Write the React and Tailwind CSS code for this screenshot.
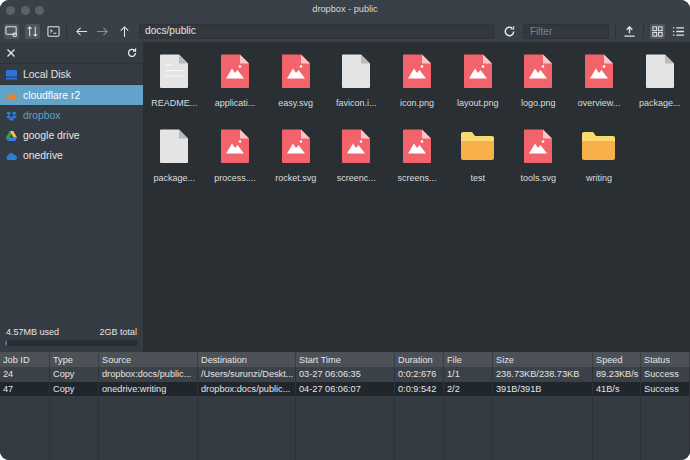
import React from 'react';

const topFiles = [
  ['README...', 'doc'], ['applicati...', 'img'], ['easy.svg', 'img'], ['favicon.i...', 'blank'], ['icon.png', 'img'],
  ['layout.png', 'img'], ['logo.png', 'img'], ['overview...', 'img'], ['package...', 'blank'],
  ['package...', 'blank'], ['process....', 'img'], ['rocket.svg', 'img'], ['screenc...', 'img'], ['screens...', 'img'],
  ['test', 'folder'], ['tools.svg', 'img'], ['writing', 'folder'],
];

const columns = 'grid grid-cols-[50px_49px_99px_98px_99px_49px_49px_100px_48px_49px]';

const jobs = [
  ['24', 'Copy', 'dropbox:docs/public...', '/Users/surunzi/Deskt...', '03-27 06:06:35', '0:0:2:676', '1/1', '238.73KB/238.73KB', '89.23KB/s', 'Success'],
  ['47', 'Copy', 'onedrive:writing', 'dropbox:docs/public...', '04-27 06:06:07', '0:0:9:542', '2/2', '391B/391B', '41B/s', 'Success'],
];

const headers = ['Job ID', 'Type', 'Source', 'Destination', 'Start Time', 'Duration', 'File', 'Size', 'Speed', 'Status'];

const FileIcon = ({ type }) => {
  if (type === 'folder') {
    return (
      <svg width="33" height="34" viewBox="0 0 33 34">
        <path d="M0 5a2 2 0 0 1 2-2h9l3 4h17a2 2 0 0 1 2 2v4H0z" fill="#fbd971" />
        <path d="M0 12h33v17a2 2 0 0 1-2 2H2a2 2 0 0 1-2-2z" fill="#f8b04a" />
      </svg>
    );
  }
  const body = type === 'img' ? '#f2636b' : '#e4e4e4';
  const fold = type === 'img' ? '#fbc4c7' : '#b9b9b9';
  return (
    <svg width="28" height="34" viewBox="0 0 28 34">
      <path d="M1 0.500h18l9 9V33a1 1 0 0 1-1 1H1a1 1 0 0 1-1-1V1.500a1 1 0 0 1 1-1z" fill={body} />
      <path d="M19 0.500l9 9h-9z" fill={fold} />
      {type === 'img' && (
        <g fill="#fff">
          <circle cx="19" cy="12.500" r="1.300" />
          <path d="M5 24.500L11 14.500l3 4.500 2.500-3 6.500 8.500z" />
        </g>
      )}
      {type === 'doc' && (
        <g fill="#fff" fillOpacity="0.85">
          <rect x="5" y="10.500" width="8" height="1" />
          <rect x="5" y="16" width="18" height="1" />
          <rect x="5" y="21.500" width="18" height="1" />
        </g>
      )}
    </svg>
  );
};

const ToolIcon = ({ children, active }) => (
  <div className={`w-[15px] h-[15px] shrink-0 flex items-center justify-center rounded-[2px] ${active ? 'bg-[#50565c]' : ''}`}>
    <svg width="13" height="13" viewBox="0 0 14 14" fill="none" stroke="currentColor" strokeWidth="1.100">
      {children}
    </svg>
  </div>
);

export default function App() {
  return (
    <div className="w-[690px] h-[460px] bg-white overflow-hidden text-[#e4e5e6] text-[9px]" style={{ fontFamily: '"Liberation Sans", Arial, sans-serif' }}>
      <div className="w-full h-full rounded-[9px] overflow-hidden flex flex-col bg-[#2a2f34]">
        {/* Title bar */}
        <div className="h-[20px] shrink-0 flex items-center bg-[#3a4047]">
          <div className="flex gap-[5.500px] pl-[6px]">
            <div className="w-[9px] h-[9px] rounded-full bg-[#5c6167]" />
            <div className="w-[9px] h-[9px] rounded-full bg-[#5c6167]" />
            <div className="w-[9px] h-[9px] rounded-full bg-[#5c6167]" />
          </div>
          <div className="flex-1 text-center text-[9.200px] text-[#d9dadb] pr-[44px]">dropbox - public</div>
        </div>

        {/* Toolbar */}
        <div className="h-[22px] shrink-0 flex items-center bg-[#3a4047] pl-[4px] text-[#e4e5e6]">
          <ToolIcon active>
            <rect x="1" y="2" width="11" height="8" rx="1" />
            <circle cx="10.500" cy="10.500" r="2" />
          </ToolIcon>
          <div className="w-[6px]" />
          <ToolIcon active>
            <path d="M4 12V2M2 4l2-2 2 2M10 2v10M8 10l2 2 2-2" />
          </ToolIcon>
          <div className="w-[6px]" />
          <ToolIcon>
            <rect x="1" y="2" width="12" height="10" rx="1" />
            <path d="M3.500 5l2 1.500-2 1.500M7 9h3" />
          </ToolIcon>
          <div className="w-[1px] h-[15px] bg-[#2f343a] ml-[5px] mr-[7px]" />
          <ToolIcon><path d="M13 7H2M6 3L2 7l4 4" /></ToolIcon>
          <div className="w-[6px]" />
          <div className="text-[#8b8f94]"><ToolIcon><path d="M1 7h11M8 3l4 4-4 4" /></ToolIcon></div>
          <div className="w-[7px]" />
          <ToolIcon><path d="M7 13V2M3 6l4-4 4 4" /></ToolIcon>
          <div className="w-[356px] h-[15px] ml-[7px] bg-[#33383e] border border-[#2e3339] rounded-[2px] flex items-center pl-[5px] text-[10.200px] shrink-0">docs/public</div>
          <div className="w-[7px]" />
          <ToolIcon>
            <path strokeWidth="1.600" d="M11.500 7a4.500 4.500 0 1 1-1.400-3.300" />
            <path d="M11.500 1v3.200H8.300" />
          </ToolIcon>
          <div className="w-[86px] h-[15px] ml-[6px] bg-[#33383e] border border-[#2e3339] rounded-[2px] flex items-center pl-[6px] text-[10px] text-[#7f8489] shrink-0">Filter</div>
          <div className="w-[1px] h-[15px] bg-[#2f343a] ml-[6px] mr-[6px]" />
          <ToolIcon><path d="M7 9V2.500M4 5l3-3 3 3M1.500 12h11" strokeWidth="1.500" /></ToolIcon>
          <div className="w-[1px] h-[15px] bg-[#2f343a] ml-[6px] mr-[6px]" />
          <ToolIcon active>
            <rect x="2" y="2" width="4" height="4" />
            <rect x="8" y="2" width="4" height="4" />
            <rect x="2" y="8" width="4" height="4" />
            <rect x="8" y="8" width="4" height="4" />
          </ToolIcon>
          <div className="w-[6px]" />
          <ToolIcon>
            <path d="M4.500 3H13M4.500 7H13M4.500 11H13M1 3h1.500M1 7h1.500M1 11h1.500" strokeWidth="1.400" />
          </ToolIcon>
        </div>

        {/* Middle */}
        <div className="h-[310px] shrink-0 flex">
          {/* Sidebar */}
          <div className="w-[143px] shrink-0 bg-[#353b42] flex flex-col">
            <div className="h-[22px] flex items-center justify-between px-[6px] border-b border-[#2e3339] shrink-0">
              <svg width="10" height="10" viewBox="0 0 10 10" stroke="#eceded" strokeWidth="1.300"><path d="M1.500 1.500l7 7M8.500 1.500l-7 7" /></svg>
              <svg width="10" height="10" viewBox="0 0 10 10" fill="none" stroke="#eceded" strokeWidth="1.300"><path d="M8.500 5a3.500 3.500 0 1 1-1-2.500" /><path d="M8.500 0.500v2.500H6" /></svg>
            </div>
            <div className="h-[21px] flex items-center pl-[6px] pt-[1px] gap-[6px] text-[10.400px] border-b border-[#2e3339]">
              <svg width="11" height="10" viewBox="0 0 11 10"><rect width="11" height="6.500" rx="1" fill="#2d73e0" /><rect y="7.500" width="11" height="2" fill="#2d73e0" /></svg>
              <span>Local Disk</span>
            </div>
            <div className="h-[20px] flex items-center pl-[6px] pt-[1px] gap-[6px] text-[10.400px] bg-[#62a3ca] text-white">
              <svg width="11" height="8" viewBox="0 0 11 8"><path d="M0 7c.3-1.500 1.500-2.200 2.500-2 .7-2 2-3.500 3.500-3.500S8.300 3 8.600 4.500C9.800 4.500 10.800 5.800 11 7z" fill="#f48120" /></svg>
              <span>cloudflare r2</span>
            </div>
            <div className="h-[20px] flex items-center pl-[6px] pt-[1px] gap-[6px] text-[10.400px] text-[#5ea1cb]">
              <svg width="11" height="10" viewBox="0 0 11 10" fill="#2d7fe0"><path d="M0 2.300L2.700.5l2.800 1.800-2.800 1.800zM5.500 2.300L8.300.5 11 2.300 8.300 4.100zM0 5.900l2.700-1.800 2.800 1.800-2.800 1.800zM8.300 4.100L11 5.900 8.300 7.700 5.500 5.900zM2.800 8.200l2.700-1.800 2.700 1.800-2.700 1.800z" /></svg>
              <span>dropbox</span>
            </div>
            <div className="h-[20px] flex items-center pl-[6px] pt-[1px] gap-[6px] text-[10.400px]">
              <svg width="11" height="10" viewBox="0 0 11 10"><path d="M3.700 0h3.600l3.700 6.500H7.400z" fill="#f6c344" /><path d="M3.700 0L0 6.500 1.800 10l3.700-6.700z" fill="#2ba45f" /><path d="M1.800 10h7.400L11 6.500H3.600z" fill="#3b7de8" /></svg>
              <span>google drive</span>
            </div>
            <div className="h-[20px] flex items-center pl-[6px] pt-[1px] gap-[6px] text-[10.400px]">
              <svg width="11" height="8" viewBox="0 0 11 8"><path d="M2.500 8A2.300 2.300 0 0 1 2 3.500 3.300 3.300 0 0 1 8.300 3 2.500 2.500 0 0 1 8.500 8z" fill="#2b7fd8" /></svg>
              <span>onedrive</span>
            </div>
            <div className="flex-1" />
            <div className="flex justify-between pl-[6px] pr-[6px] text-[9px] leading-[10px]">
              <span>4.57MB used</span>
              <span>2GB total</span>
            </div>
            <div className="mx-[5px] mt-[3px] mb-[6px] h-[6px] rounded-full bg-[#2a2f34] overflow-hidden">
              <div className="w-[2px] h-full bg-[#4a7d9c]" />
            </div>
          </div>

          {/* File grid */}
          <div className="flex-1 bg-[#2a2f34] pl-[1px] pt-[12px] grid grid-cols-9 auto-rows-[75px]">
            {topFiles.map(([name, type], i) => (
              <div key={i} className="flex flex-col items-center h-[75px]">
                <div className="h-[34px] flex items-center justify-center"><FileIcon type={type} /></div>
                <div className="mt-[9px] text-[9px] leading-[12px] text-[#dcdddf] whitespace-nowrap">{name}</div>
              </div>
            ))}
          </div>
        </div>

        {/* Jobs table */}
        <div className="flex-1 flex flex-col bg-[#353b42]">
          <div className={`${columns} h-[15px] bg-[#4b5157] shrink-0`}>
            {headers.map((h) => (
              <div key={h} className="pl-[3px] pt-[2px] flex items-center border-r border-[#383d44] text-[9.200px] text-[#e4e5e6]">{h}</div>
            ))}
          </div>
          {jobs.map((row, r) => (
            <div key={row[0]} className={`${columns} h-[14.500px] shrink-0 ${r === 0 ? 'bg-[#3b4148]' : 'bg-[#21252c]'}`}>
              {row.map((cell, c) => (
                <div key={c} className="pl-[3px] pt-[2px] flex items-center border-r border-[#2e3339] text-[9.200px] whitespace-nowrap overflow-hidden">{cell}</div>
              ))}
            </div>
          ))}
          <div className={`${columns} flex-1`}>
            {headers.map((h) => (
              <div key={h} className="border-r border-[#2e3339]" />
            ))}
          </div>
        </div>
      </div>
    </div>
  );
}
